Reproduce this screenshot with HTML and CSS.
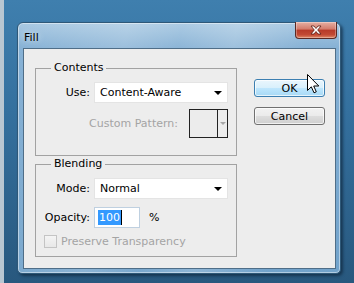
FILE: index.html
```html
<!DOCTYPE html>
<html>
<head>
<meta charset="utf-8">
<link rel="stylesheet" href="styles.css">
</head>
<body>
<div class="desktop">
  <div class="window">
    <div class="titlebar">
      <span class="title">Fill</span>
      <div class="close">
        <svg width="16" height="10" viewBox="0 0 16 10"><path d="M3 1 L6 1 L8 3.5 L10 1 L13 1 L9.7 5 L13 9 L10 9 L8 6.5 L6 9 L3 9 L6.3 5 Z" fill="#fff" stroke="#5a1a10" stroke-width="0.8"/></svg>
      </div>
    </div>
    <div class="client">
      <div class="groups">
        <fieldset class="group contents">
          <legend>Contents</legend>
          <div class="row">
            <span class="lbl">Use:</span>
            <div class="select"><span>Content-Aware</span><svg class="arrow" width="8" height="4" viewBox="0 0 8 4"><path d="M0 0 H8 L4 4 Z" fill="#000"/></svg></div>
          </div>
          <div class="row pattern-row">
            <span class="lbl disabled">Custom Pattern:</span>
            <div class="pattern-box"><div class="swatch"></div><div class="pattern-arrow"><svg width="6" height="3" viewBox="0 0 6 3"><path d="M0 0 H6 L3 3 Z" fill="#a8a8a8"/></svg></div></div>
          </div>
        </fieldset>
        <fieldset class="group blending">
          <legend>Blending</legend>
          <div class="row">
            <span class="lbl">Mode:</span>
            <div class="select"><span>Normal</span><svg class="arrow" width="8" height="4" viewBox="0 0 8 4"><path d="M0 0 H8 L4 4 Z" fill="#000"/></svg></div>
          </div>
          <div class="row opacity-row">
            <span class="lbl">Opacity:</span>
            <div class="input"><span class="sel">100</span><span class="caret"></span></div>
            <span class="pct">%</span>
          </div>
          <div class="check-row">
            <span class="checkbox"></span>
            <span class="disabled">Preserve Transparency</span>
          </div>
        </fieldset>
      </div>
      <div class="buttons">
        <div class="btn default">OK</div>
        <div class="btn">Cancel</div>
      </div>
      <svg class="cursor" width="13" height="20" viewBox="0 0 13 20"><path d="M0.5 0.5 L0.5 16.5 L4.3 12.8 L7 18.8 L9.3 17.8 L6.7 12 L11.8 12 Z" fill="#fff" stroke="#000" stroke-width="1" stroke-linejoin="miter"/></svg>
    </div>
  </div>
</div>
</body>
</html>
```

FILE: styles.css
```css
html, body {
  margin: 0;
  padding: 0;
}
body {
  width: 354px;
  height: 283px;
  overflow: hidden;
  font-family: "DejaVu Sans", Verdana, sans-serif;
  font-size: 11px;
  color: #000;
}
.desktop {
  width: 354px;
  height: 283px;
  box-sizing: border-box;
  padding: 22px 0 0 17px;
  background:
    linear-gradient(to right, #b9c7d2 0, #b9c7d2 4px, rgba(0,0,0,0) 4px),
    linear-gradient(to bottom, #3f7fae 0%, #34709e 40%, #28587e 100%);
}
.window {
  position: relative;
  width: 324px;
  height: 252px;
  box-sizing: border-box;
  border: 1px solid #2e5878;
  border-radius: 6px 6px 5px 5px;
  background:
    linear-gradient(100deg, rgba(255,255,255,0) 0%, rgba(255,255,255,0.18) 30%, rgba(255,255,255,0.05) 45%, rgba(255,255,255,0.2) 60%, rgba(255,255,255,0) 80%),
    linear-gradient(to bottom, #a9c9e2 0%, #86b1d5 10%, #72a3cb 100%);
  box-shadow: 2px 2px 3px rgba(10,30,50,0.6), inset 0 0 0 1px rgba(255,255,255,0.45);
}
.titlebar {
  height: 25px;
  display: flex;
  align-items: flex-start;
  justify-content: space-between;
}
.title {
  margin: 8px 0 0 6px;
  font-size: 11px;
  color: #000;
  text-shadow: 0 0 6px rgba(255,255,255,0.9);
}
.close {
  width: 42px;
  height: 17px;
  margin: -1px 3px 0 0;
  box-sizing: border-box;
  border: 1px solid #5b2a24;
  border-top: none;
  border-radius: 0 0 4px 4px;
  background: linear-gradient(to bottom, #e6b0a4 0%, #d47a6a 45%, #b73a28 50%, #c24a34 80%, #e08a68 100%);
  display: flex;
  align-items: center;
  justify-content: center;
  box-shadow: inset 0 0 0 1px rgba(255,255,255,0.3);
}
.client {
  position: relative;
  width: 313px;
  height: 221px;
  margin-left: 5px;
  box-sizing: border-box;
  border: 1px solid #4f6e88;
  background: #ededed;
  display: flex;
  align-items: flex-start;
  padding: 12px 0 0 11px;
}
.groups {
  display: flex;
  flex-direction: column;
  gap: 1px;
}
.group {
  margin: 0;
  padding: 0 8px 0 0;
  width: 202px;
  box-sizing: border-box;
  border: 1px solid #a2a2a2;
}
.group legend {
  margin-left: 15px;
  padding: 0 3px;
  line-height: 14px;
  font-size: 11px;
}
.contents {
  height: 95px;
  padding-top: 7px;
}
.blending {
  height: 100px;
  padding-top: 7px;
}
.row {
  display: flex;
  align-items: center;
}
.lbl {
  width: 54px;
  text-align: right;
  margin-right: 4px;
}
.select {
  width: 134px;
  height: 21px;
  box-sizing: border-box;
  background: #fff;
  border: 1px solid #e4e4e4;
  display: flex;
  align-items: center;
  justify-content: space-between;
  padding: 0 5px 0 5px;
}
.pattern-row {
  justify-content: flex-end;
  margin-top: 6px;
}
.pattern-row .lbl {
  width: auto;
  margin-right: 11px;
}
.disabled {
  color: #a4a4a4;
}
.pattern-box {
  width: 39px;
  height: 29px;
  box-sizing: border-box;
  border: 1px solid #222;
  display: flex;
}
.swatch {
  width: 27px;
  border-right: 1px solid #222;
  background: #ececec;
}
.pattern-arrow {
  flex: 1;
  display: flex;
  align-items: center;
  justify-content: center;
}
.opacity-row {
  margin-top: 8px;
}
.input {
  width: 46px;
  height: 21px;
  box-sizing: border-box;
  background: #fff;
  border: 1px solid #bfd0e0;
  display: flex;
  align-items: center;
  padding-left: 3px;
}
.sel {
  background: #3399ff;
  color: #fff;
  line-height: 15px;
  padding: 0 1px;
}
.caret {
  width: 1px;
  height: 15px;
  background: #000;
}
.pct {
  margin-left: 9px;
}
.check-row {
  display: flex;
  align-items: center;
  margin-top: 7px;
  margin-left: 8px;
  gap: 4px;
}
.checkbox {
  width: 13px;
  height: 13px;
  box-sizing: border-box;
  border: 1px solid #c4c4c4;
  background: linear-gradient(#f4f4f4, #e8e8e8);
}
.buttons {
  display: flex;
  flex-direction: column;
  gap: 9px;
  margin: 18px 0 0 17px;
}
.btn {
  width: 71px;
  height: 18px;
  box-sizing: border-box;
  border: 1px solid #707070;
  border-radius: 3px;
  background: linear-gradient(to bottom, #f2f2f2 0%, #ebebeb 48%, #dddddd 52%, #cfcfcf 100%);
  display: flex;
  align-items: center;
  justify-content: center;
  box-shadow: inset 0 0 0 1px rgba(255,255,255,0.7);
}
.btn + .btn {
  margin-top: 1px;
}
.btn.default {
  border-color: #3c7fb1;
  background: linear-gradient(to bottom, #eaf6fd 0%, #d9f0fc 48%, #bee6fd 52%, #a7d9f5 100%);
}
.cursor {
  position: absolute;
  left: 283px;
  top: 25px;
}
```
